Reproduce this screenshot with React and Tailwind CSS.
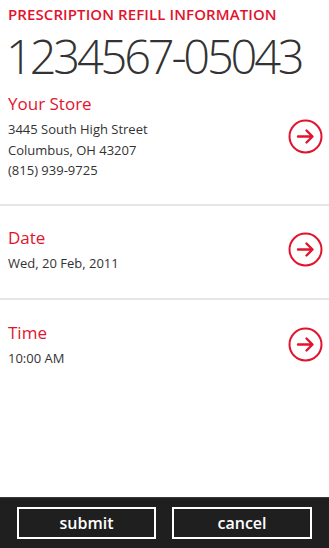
import React from 'react';

const RED = 'text-[#e2142d]';

function ArrowCircle() {
  return (
    <svg width="35" height="35" viewBox="0 0 35 35" fill="none" className="shrink-0">
      <circle cx="17.5" cy="17.5" r="16" stroke="#e2142d" strokeWidth="2" />
      <path d="M10 17.5h14M18.5 11.5l6 6-6 6" stroke="#e2142d" strokeWidth="2.4" strokeLinecap="round" strokeLinejoin="round" />
    </svg>
  );
}

function Section({ title, lines, className }) {
  return (
    <div className={`flex items-center justify-between pl-2 pr-[6px] ${className}`}>
      <div>
        <div className={`text-[17px] leading-[24px] ${RED}`}>{title}</div>
        <div className="mt-[3px]">
          {lines.map((l) => (
            <div key={l} className="text-[13px] leading-[20.5px] text-[#333]">{l}</div>
          ))}
        </div>
      </div>
      <ArrowCircle />
    </div>
  );
}

export default function App() {
  return (
    <div className="w-[329px] h-[548px] bg-white flex flex-col overflow-hidden" style={{ fontFamily: '"Segoe UI", "Open Sans", "Noto Sans", sans-serif' }}>
      <div className="flex-1">
        <div className={`px-2 pt-[5px] text-[15px] leading-[18px] font-semibold tracking-[0.1px] ${RED}`}>
          PRESCRIPTION REFILL INFORMATION
        </div>
        <div className="px-[6px] mt-[5px] text-[47px] leading-[56px] font-light text-[#333] tracking-[-3.2px] whitespace-nowrap">
          1234567-05043
        </div>
        <Section
          title="Your Store"
          lines={['3445 South High Street', 'Columbus, OH 43207', '(815) 939-9725']}
          className="pt-[8px] pb-[23px] border-b-2 border-[#e6e6e6]"
        />
        <Section
          title="Date"
          lines={['Wed, 20 Feb, 2011']}
          className="pt-[20px] pb-[25px] border-b-2 border-[#e6e6e6]"
        />
        <Section
          title="Time"
          lines={['10:00 AM']}
          className="pt-[21px] pb-[24px]"
        />
      </div>
      <div className="h-[51px] bg-[#1f1f1f] border-t border-[#3a3a3a] flex items-center justify-between px-[17px]">
        <button className="w-[139px] h-[32px] border-2 border-white bg-[#1f1f1f] text-white text-[16px] font-semibold leading-none">
          submit
        </button>
        <button className="w-[140px] h-[32px] border-2 border-white bg-[#1f1f1f] text-white text-[16px] font-semibold leading-none">
          cancel
        </button>
      </div>
    </div>
  );
}
